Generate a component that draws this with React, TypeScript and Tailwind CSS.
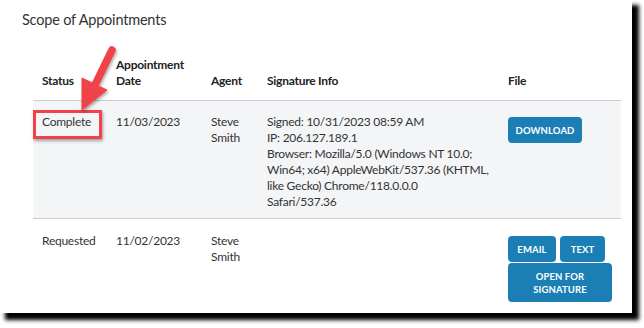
import React from "react";

const font = { fontFamily: "Lato, 'Noto Sans', sans-serif" };

const Btn = ({ children, className = "" }: { children: React.ReactNode; className?: string }) => (
  <button
    className={`rounded-[4px] bg-[#1b7fb5] text-[9.5px] font-bold uppercase leading-[13px] tracking-[0.1px] text-white ${className}`}
  >
    {children}
  </button>
);

export default function App() {
  return (
    <div className="min-h-screen bg-white text-[#333]" style={font}>
      <div className="relative h-[313px] w-[632px] bg-white shadow-[6px_6px_4px_1px_#000]">
        <h2 className="pl-[22px] pt-[10px] text-[14.5px] font-normal leading-[20px] tracking-[-0.2px] text-[#333]">
          Scope of Appointments
        </h2>

        <div className="ml-[33px] mt-[27px] w-[588px] text-[12px] leading-[16px] tracking-[-0.25px]">
          {/* header */}
          <div className="grid grid-cols-[74px_95px_56px_241px_122px] items-end border-b border-[#c9cdd3] pb-[11px] font-bold text-[#222]">
            <div className="pl-[9px]">Status</div>
            <div className="pl-[9px]">
              Appointment
              <br />
              Date
            </div>
            <div className="pl-[9px]">Agent</div>
            <div className="pl-[9px]">Signature Info</div>
            <div className="pl-[9px]">File</div>
          </div>

          {/* row 1 */}
          <div className="grid grid-cols-[74px_95px_56px_241px_122px] border-b border-[#c9cdd3] bg-[#f4f5f7] pb-[8px] pt-[13px]">
            <div className="pl-[9px]">Complete</div>
            <div className="pl-[9px]">11/03/2023</div>
            <div className="pl-[9px]">
              Steve
              <br />
              Smith
            </div>
            <div className="whitespace-nowrap pl-[9px]">
              <div>Signed: 10/31/2023 08:59 AM</div>
              <div>IP: 206.127.189.1</div>
              <div>Browser: Mozilla/5.0 (Windows NT 10.0;</div>
              <div>Win64; x64) AppleWebKit/537.36 (KHTML,</div>
              <div>like Gecko) Chrome/118.0.0.0</div>
              <div>Safari/537.36</div>
            </div>
            <div className="pl-[9px] pt-[3px]">
              <Btn className="h-[26px] w-[74px]">Download</Btn>
            </div>
          </div>

          {/* row 2 */}
          <div className="grid grid-cols-[74px_95px_56px_241px_122px] pt-[14px]">
            <div className="pl-[9px]">Requested</div>
            <div className="pl-[9px]">11/02/2023</div>
            <div className="pl-[9px]">
              Steve
              <br />
              Smith
            </div>
            <div className="pl-[9px]" />
            <div className="flex w-[113px] flex-col gap-[1px] pl-[9px] pt-[3px]">
              <div className="flex gap-[4px]">
                <Btn className="h-[26px] w-[48px]">Email</Btn>
                <Btn className="h-[26px] w-[45px]">Text</Btn>
              </div>
              <Btn className="h-[39px] w-[104px]">
                Open for
                <br />
                Signature
              </Btn>
            </div>
          </div>
        </div>

        {/* annotation: red highlight box */}
        <div className="absolute left-[33px] top-[110px] h-[29px] w-[69px] border-[3px] border-[#ef4349] shadow-[1px_2px_3px_rgba(0,0,0,0.35)]" />

        {/* annotation: arrow */}
        <svg className="absolute left-0 top-0" width="140" height="120" viewBox="0 0 140 120">
          <defs>
            <filter id="sh" x="-20%" y="-20%" width="150%" height="150%">
              <feDropShadow dx="1" dy="2" stdDeviation="1.5" floodColor="#000" floodOpacity="0.35" />
            </filter>
          </defs>
          <g filter="url(#sh)" fill="#f0434a" stroke="#f0434a">
            <line x1="112" y1="50" x2="95" y2="85" strokeWidth="7.5" strokeLinecap="round" />
            <polygon points="82,110 82,78 107,90" strokeWidth="1" strokeLinejoin="round" />
          </g>
        </svg>
      </div>
    </div>
  );
}
